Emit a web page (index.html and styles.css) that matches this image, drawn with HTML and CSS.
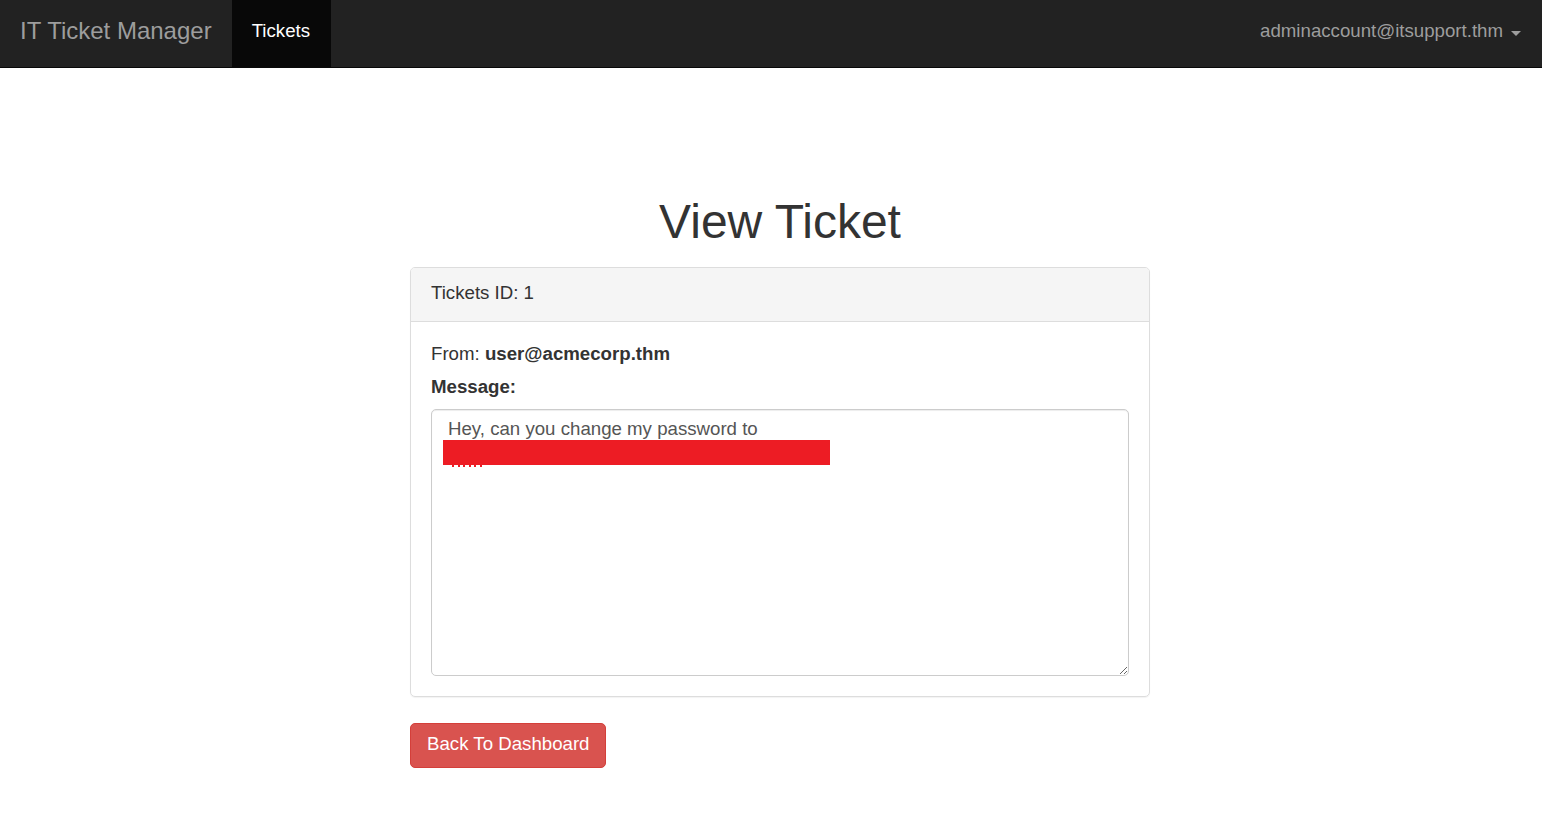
FILE: index.html
```html
<!DOCTYPE html>
<html lang="en">
<head>
<meta charset="utf-8">
<title>View Ticket</title>
<link rel="stylesheet" href="styles.css">
</head>
<body>
<nav class="navbar">
  <div class="nav-left">
    <a class="brand" href="#">IT Ticket Manager</a>
    <a class="nav-link active" href="#">Tickets</a>
  </div>
  <a class="nav-user" href="#">adminaccount@itsupport.thm <span class="caret"></span></a>
</nav>
<main class="main">
  <h1 class="title">View Ticket</h1>
  <div class="panel">
    <div class="panel-heading">Tickets ID: 1</div>
    <div class="panel-body">
      <div class="from">From: <strong>user@acmecorp.thm</strong></div>
      <label class="msg-label">Message:</label>
      <div class="msg-wrap">
        <textarea class="msg" readonly>Hey, can you change my password to
</textarea>
        <div class="redact"></div>
        <div class="redact-dots"></div>
      </div>
    </div>
  </div>
  <a class="btn-danger" href="#">Back To Dashboard</a>
</main>
</body>
</html>
```
FILE: styles.css
```css
html, body {
  margin: 0;
  padding: 0;
}
body {
  font-family: "Liberation Sans", Arial, Helvetica, sans-serif;
  font-size: 18.67px;
  line-height: 26.67px;
  color: #333;
  background: #fff;
}
a { text-decoration: none; }

.navbar {
  display: flex;
  justify-content: space-between;
  align-items: stretch;
  height: 67px;
  background: #222;
  border-bottom: 1px solid #080808;
}
.nav-left {
  display: flex;
  align-items: stretch;
}
.brand {
  display: flex;
  align-items: center;
  padding: 0 20px 5px 20px;
  font-size: 24px;
  color: #9d9d9d;
}
.nav-link {
  display: flex;
  align-items: center;
  padding: 0 21px 4px 20px;
  color: #9d9d9d;
}
.nav-link.active {
  background: #080808;
  color: #fff;
}
.nav-user {
  display: flex;
  align-items: center;
  gap: 8px;
  padding: 0 21px 5px 19px;
  color: #9d9d9d;
}
.caret {
  display: inline-block;
  width: 0;
  height: 0;
  margin-top: 4px;
  border-top: 5.3px solid #9d9d9d;
  border-left: 5.3px solid transparent;
  border-right: 5.3px solid transparent;
}

.main {
  width: 740px;
  margin: 0 0 0 410px;
  padding-top: 127px;
}
.title {
  margin: 0 0 19px;
  text-align: center;
  font-size: 48px;
  font-weight: 400;
  line-height: 53px;
  color: #333;
}
.panel {
  border: 1px solid #ddd;
  border-radius: 5px;
  box-shadow: 0 1px 1px rgba(0,0,0,.05);
  margin-bottom: 26px;
}
.panel-heading {
  background: #f5f5f5;
  border-bottom: 1px solid #ddd;
  border-radius: 4px 4px 0 0;
  padding: 11.5px 20px 14.5px;
}
.panel-body {
  padding: 19px 20px 20px;
}
.from {
  margin-bottom: 6.5px;
}
.msg-label {
  display: block;
  font-weight: 700;
  margin-bottom: 8px;
}
.msg-wrap {
  position: relative;
}
.msg {
  display: block;
  box-sizing: border-box;
  width: 698px;
  height: 267px;
  margin: 0;
  padding: 6px 16px;
  border: 1px solid #ccc;
  border-radius: 5px;
  box-shadow: inset 0 1px 1px rgba(0,0,0,.075);
  font-family: "Liberation Sans", Arial, Helvetica, sans-serif;
  font-size: 18.67px;
  line-height: 26.67px;
  color: #555;
  background: #fff;
  resize: vertical;
  outline: none;
}
.redact {
  position: absolute;
  left: 12px;
  top: 31px;
  width: 387px;
  height: 25px;
  background: #ed1c24;
}
.redact-dots {
  position: absolute;
  left: 21px;
  top: 56px;
  width: 34px;
  height: 2px;
  background: repeating-linear-gradient(90deg, #ed1c24 0 2px, transparent 2px 5.6px);
}
.btn-danger {
  display: inline-flex;
  align-items: center;
  box-sizing: border-box;
  height: 45px;
  padding: 0 16px 1px;
  font-size: 18.67px;
  color: #fff;
  background: #d9534f;
  border: 1.33px solid #d43f3a;
  border-radius: 5px;
}
```
